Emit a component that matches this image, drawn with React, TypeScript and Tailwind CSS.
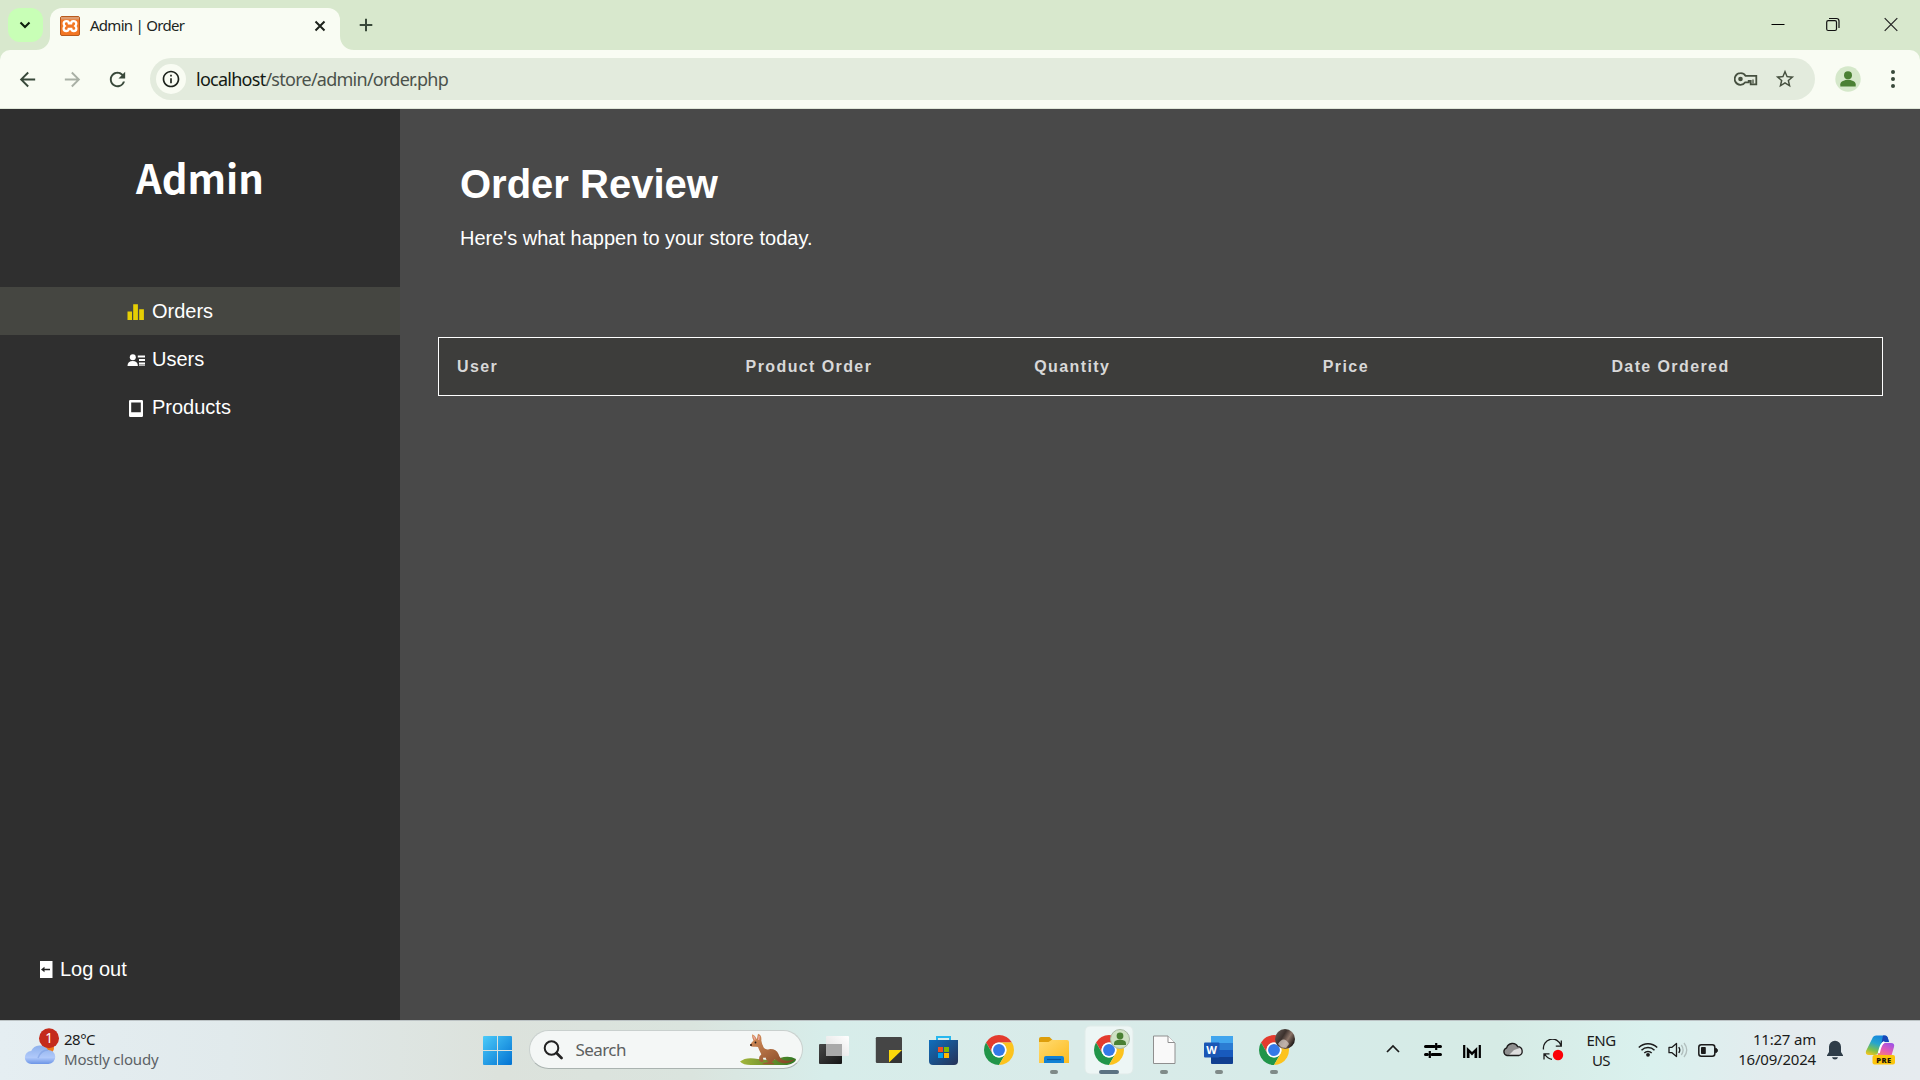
import React from "react";
import { MdArrowBack, MdArrowForward, MdRefresh, MdInfoOutline, MdStarBorder } from "react-icons/md";

function TabFlare({ flip = false }: { flip?: boolean }) {
  return (
    <svg width="14" height="14" viewBox="0 0 14 14" className={flip ? "-scale-x-100 self-end" : "self-end"}>
      <path d="M14 0v14H0C8 14 14 8 14 0z" fill="#f9fcf3" />
    </svg>
  );
}

function XamppIcon() {
  return (
    <svg width="20" height="20" viewBox="0 0 20 20">
      <rect x=".5" y=".5" width="19" height="19" rx="1.5" fill="#f37623" stroke="#b85a1d" />
      <rect x="1" y="1" width="18" height="2.5" fill="#dd9c70" />
      <path
        d="M6.6 5.2c-2 0-2.9 1.2-2.9 2.5 0 1 .5 1.7 1.1 2.3-.7.6-1.2 1.4-1.2 2.4 0 1.5 1.1 2.6 2.7 2.6 1.5 0 2.2-.9 2.4-2.2h2.6c.2 1.3.9 2.2 2.4 2.2 1.6 0 2.7-1.1 2.7-2.6 0-1-.5-1.8-1.2-2.4.6-.6 1.1-1.3 1.1-2.3 0-1.3-.9-2.5-2.9-2.5-1.5 0-2.2.8-2.3 2.1H8.900C8.800 6 8.100 5.200 6.600 5.200z"
        fill="none"
        stroke="#fff"
        strokeWidth="2.3"
      />
    </svg>
  );
}

function TabStrip() {
  return (
    <div className="flex h-[50px] bg-[#d8e8cd]">
      <div className="mt-2 ml-2 flex h-[34px] w-[35px] items-center justify-center rounded-[12px] bg-[#c8ffb6]">
        <svg width="12" height="8" viewBox="0 0 12 8" className="mr-px">
          <path d="M1.500 1.500 6 6l4.500-4.500" fill="none" stroke="#0c200c" strokeWidth="2.100" />
        </svg>
      </div>
      <div className="-ml-[7px] flex">
        <TabFlare />
        <div className="mt-2 flex h-[42px] w-[290px] items-center rounded-t-[12px] bg-[#f9fcf3] pt-px pb-2 pl-[10px]">
          <XamppIcon />
          <span className="ml-[10px] w-[220px] text-[15px] tracking-[-0.72px] whitespace-nowrap text-[#20251e]">Admin | Order</span>
          <svg width="12" height="12" viewBox="0 0 12 12" className="ml-[4px]">
            <path d="M1.500 1.500l9 9M10.500 1.500l-9 9" stroke="#1d221b" strokeWidth="2" />
          </svg>
        </div>
        <TabFlare flip />
      </div>
      <svg width="14" height="14" viewBox="0 0 14 14" className="mt-[18px] ml-[5px]">
        <path d="M7 .7v12.600M.7 7h12.600" stroke="#39493a" strokeWidth="2" />
      </svg>
      <div className="mt-4 mr-[22px] ml-auto flex">
        <svg width="14" height="17" viewBox="0 0 14 17" className="mr-[41px]">
          <path d="M.5 8.500h13" stroke="#000" strokeWidth="1" />
        </svg>
        <svg width="14" height="17" viewBox="0 0 14 17" className="mr-[44px]">
          <rect x=".7" y="4.700" width="9.800" height="9.800" rx="1.500" fill="none" stroke="#111" strokeWidth="1.200" />
          <path d="M3 2.500h7.500q2.500 0 2.500 2.500v7" fill="none" stroke="#111" strokeWidth="1.200" />
        </svg>
        <svg width="14" height="17" viewBox="0 0 14 17">
          <path d="M.7 2.200l12.600 12.600M13.300 2.200.7 14.800" stroke="#222" strokeWidth="1.200" />
        </svg>
      </div>
    </div>
  );
}

function Toolbar() {
  return (
    <div className="bg-[#d8e8cd]">
      <div className="flex h-[59px] items-center rounded-t-[10px] border-b border-[#dfe6d8] bg-[#f9fcf3]">
        <MdArrowBack size={23} className="ml-[16px] text-[#39493a]" />
        <MdArrowForward size={23} className="ml-[22px] text-[#a9b0a5]" />
        <MdRefresh size={23} className="ml-[22px] text-[#39493a]" />
        <div className="ml-[21px] flex h-[42px] w-[1665px] items-center rounded-full bg-[#e3ebdd]">
          <div className="ml-[6px] flex size-[30px] items-center justify-center rounded-full bg-[#f9fcf3]">
            <MdInfoOutline size={20} className="text-[#1d231c]" />
          </div>
          <span className="ml-[10px] text-[18px] tracking-[-0.74px] whitespace-nowrap text-[#4b524b]">
            <span className="text-[#141a14]">localhost</span>/store/admin/order.php
          </span>
          <svg width="24" height="16" viewBox="0 0 24 16" className="ml-auto">
            <path
              d="M6.500 2.200a5.800 5.800 0 1 0 4.800 9.100h3.400v-1.400h2v3.400h5.600V4.900H11.600A5.800 5.800 0 0 0 6.500 2.200z"
              fill="none"
              stroke="#46503f"
              strokeWidth="1.800"
            />
            <circle cx="6.500" cy="8" r="2.300" fill="#46503f" />
            <path d="M19 8.500v4" fill="none" stroke="#46503f" strokeWidth="1.300" />
          </svg>
          <MdStarBorder size={22} className="mr-[19px] ml-[16px] text-[#46503f]" />
        </div>
        <svg width="26" height="26" viewBox="0 0 26 26" className="ml-[20px]">
          <circle cx="13" cy="13" r="12.700" fill="#d5e8ca" />
          <circle cx="13" cy="9.300" r="4" fill="#4a8033" />
          <path d="M5.300 20.500v-2.200c0-3 4.700-4.600 7.700-4.600s7.700 1.600 7.700 4.600v2.200z" fill="#4a8033" />
        </svg>
        <svg width="6" height="20" viewBox="0 0 6 20" className="ml-[29px]">
          <circle cx="3" cy="3" r="2" fill="#39493a" />
          <circle cx="3" cy="10" r="2" fill="#39493a" />
          <circle cx="3" cy="17" r="2" fill="#39493a" />
        </svg>
      </div>
    </div>
  );
}

function BarsIcon() {
  return (
    <svg width="18" height="18" viewBox="0 0 18 18" className="mt-[2px]">
      <path d="M.5 8.500h4.500V17H.5zM6.200 1.200h4.700V17H6.200zM12.200 6.300h4.700V17h-4.700z" fill="#e6cf04" />
    </svg>
  );
}

function UserDetailIcon() {
  return (
    <svg width="18" height="18" viewBox="0 0 18 18" className="mt-px">
      <circle cx="5.800" cy="6.200" r="3" fill="#fff" />
      <path d="M.5 15c0-3.200 2-5 5.200-5s5.200 1.800 5.200 5z" fill="#fff" />
      <path d="M10.800 5.500h7.200M12 9h6M12 12.500h6" stroke="#fff" strokeWidth="1.800" />
      <path d="M12 14.300h6" stroke="#fff" strokeWidth=".8" />
    </svg>
  );
}

function TabletIcon() {
  return (
    <svg width="18" height="18" viewBox="0 0 18 18" className="mt-px">
      <path fillRule="evenodd" d="M3.200 1h11.600q1.200 0 1.200 1.200v14.600q0 1.200-1.200 1.200H3.200Q2 18 2 16.800V2.200Q2 1 3.200 1zM4.200 3.500v9.800h9.600V3.500z" fill="#fff" />
    </svg>
  );
}

const navItems = [
  { label: "Orders", icon: <BarsIcon />, active: true },
  { label: "Users", icon: <UserDetailIcon />, active: false },
  { label: "Products", icon: <TabletIcon />, active: false },
];

function Sidebar() {
  return (
    <div className="flex w-[400px] flex-col bg-[#2f2f2f] font-['Liberation_Sans',sans-serif] text-[20px] text-white">
      <div className="h-[178px] pt-[38px] text-center font-['Noto_Sans_CJK_JP',sans-serif] text-[40px] leading-[60px] font-bold">Admin</div>
      {navItems.map((n) => (
        <div key={n.label} className={n.active ? "flex h-12 items-center bg-[#454641] pl-[127px]" : "flex h-12 items-center pl-[127px]"}>
          {n.icon}
          <span className="ml-[7px]">{n.label}</span>
        </div>
      ))}
      <div className="mt-auto mb-[36px] flex h-[30px] items-center pl-10">
        <svg width="13" height="18" viewBox="0 0 13 18">
          <rect x="0" y="1" width="12.500" height="17" fill="#fff" />
          <path d="M1 9.500 4.500 6.700v5.600z" fill="#222" />
          <path d="M3.500 9.500h6.500" stroke="#222" strokeWidth="1.500" />
        </svg>
        <span className="ml-[7px]">Log out</span>
      </div>
    </div>
  );
}

const columns = ["User", "Product Order", "Quantity", "Price", "Date Ordered"];

function OrderPanel() {
  return (
    <div className="flex-1 bg-[#494949] font-['Liberation_Sans',sans-serif] text-white">
      <div className="pt-[52px] pl-[60px] text-[40px] leading-[46px] font-bold">Order Review</div>
      <div className="mt-[19px] pl-[60px] text-[20px] leading-[24px]">Here's what happen to your store today.</div>
      <div className="mt-[87px] ml-[38px] grid h-[59px] w-[1445px] grid-cols-5 items-center border border-white bg-[#3d3d3b] text-[16px] font-bold text-[#d8d8d8]">
        {columns.map((c) => (
          <div key={c} className="pl-[18px] tracking-[1.4px]">{c}</div>
        ))}
      </div>
    </div>
  );
}

function ChromeMark() {
  return (
    <svg x="13" y="15" width="30" height="30" viewBox="0 0 48 48">
      <path d="M24 12H44.780A24 24 0 0 0 3.220 12L13.600 30A12 12 0 0 1 24 12z" fill="#e33b2e" />
      <path d="M13.600 30 3.220 12A24 24 0 0 0 24 48L34.400 30A12 12 0 0 1 13.600 30z" fill="#219549" />
      <path d="M34.400 30 24 48A24 24 0 0 0 44.780 12H24A12 12 0 0 1 34.400 30z" fill="#fcc31e" />
      <circle cx="24" cy="24" r="12" fill="#fff" />
      <circle cx="24" cy="24" r="9.500" fill="#3479e8" />
    </svg>
  );
}

function Slot({ children }: { children: React.ReactNode }) {
  return (
    <svg width="55" height="60" viewBox="0 0 55 60" className="shrink-0">
      {children}
    </svg>
  );
}

const Dot = () => <rect x="24" y="50" width="8" height="4" rx="2" fill="#7f8a88" />;

function AppIcons() {
  return (
    <div className="flex">
      <Slot>
        <defs>
          <linearGradient id="tvDark" x1="0" y1="0" x2="1" y2="1">
            <stop offset="0" stopColor="#484848" />
            <stop offset="1" stopColor="#151515" />
          </linearGradient>
          <linearGradient id="tvLight" x1="1" y1="0" x2="0" y2="1">
            <stop offset="0" stopColor="#fff" />
            <stop offset="1" stopColor="#dedede" />
          </linearGradient>
        </defs>
        <rect x="13" y="24" width="23" height="20" rx="1" fill="url(#tvDark)" />
        <rect x="20" y="16" width="23" height="20" rx="1" fill="url(#tvLight)" />
        <rect x="20" y="24" width="16" height="12" fill="#a9a9a9" />
      </Slot>
      <Slot>
        <rect x="14.800" y="17" width="26.200" height="26" rx="1.200" fill="#454545" />
        <path d="M28 43V30h13v13z" fill="#333" />
        <path d="M28 30h13L28 42.500z" fill="#fcd80b" />
      </Slot>
      <Slot>
        <defs>
          <linearGradient id="store" x1="0" y1="0" x2="1" y2="1">
            <stop offset="0" stopColor="#0f6fbe" />
            <stop offset="1" stopColor="#263256" />
          </linearGradient>
        </defs>
        <path d="M21 22v-5h13v5" fill="none" stroke="#27b7ee" strokeWidth="2" />
        <path d="M13 20h29v21q0 4-4 4H17q-4 0-4-4z" fill="url(#store)" />
        <rect x="22" y="27" width="5" height="5" fill="#f25022" />
        <rect x="28" y="27" width="5" height="5" fill="#7fba00" />
        <rect x="22" y="33" width="5" height="5" fill="#00a4ef" />
        <rect x="28" y="33" width="5" height="5" fill="#ffb900" />
      </Slot>
      <Slot>
        <ChromeMark />
      </Slot>
      <Slot>
        <defs>
          <linearGradient id="folder" x1="0" y1="0" x2="1" y2="1">
            <stop offset="0" stopColor="#ffdb72" />
            <stop offset="1" stopColor="#fdbb1d" />
          </linearGradient>
        </defs>
        <path d="M13 23v-4q0-2 2-2h8.500l3 3-3 3z" fill="#dd9e0b" />
        <path d="M13 22h9.500l3-2H41q2 0 2 2v21H13z" fill="url(#folder)" />
        <path d="M18 43v-5q0-2 2-2h16q2 0 2 2v5z" fill="#1281d4" />
        <path d="M21 39.500h14" stroke="#0a569c" strokeWidth="1.200" />
        <Dot />
      </Slot>
      <Slot>
        <rect x="4" y="6" width="48" height="48" rx="5" fill="#edf6f5" stroke="#e0ebe9" />
        <ChromeMark />
        <circle cx="39" cy="19" r="9.500" fill="#cfe2c4" stroke="#a9b8a3" />
        <circle cx="39" cy="16" r="3.400" fill="#4a8033" />
        <path d="M33 25v-1.500q0-3.700 6-3.700t6 3.700V25z" fill="#4a8033" />
        <rect x="18" y="50" width="20" height="4" rx="2" fill="#5b7282" />
      </Slot>
      <Slot>
        <path d="M17.500 16H32l7 7v20.500H17.500z" fill="#f9f9f9" stroke="#8f8f8f" />
        <path d="M32 16v6.500h6.500" fill="#fff" stroke="#8f8f8f" />
        <Dot />
      </Slot>
      <Slot>
        <rect x="20" y="16" width="22" height="28" rx="1" fill="#103f91" />
        <path d="M20 16h22v7H20z" fill="#41a5ee" />
        <path d="M20 23h22v7H20z" fill="#2b7cd3" />
        <path d="M20 30h22v7H20z" fill="#185abd" />
        <rect x="13" y="22.500" width="15.500" height="15" rx="1" fill="#1a56b5" />
        <text x="20.600" y="34" textAnchor="middle" fontFamily="Open Sans, sans-serif" fontWeight="700" fontSize="11" fill="#fff">W</text>
        <Dot />
      </Slot>
      <Slot>
        <defs>
          <linearGradient id="photo" x1="0" y1="0" x2="1" y2=".6">
            <stop offset="0" stopColor="#6f6660" />
            <stop offset=".45" stopColor="#3c312d" />
            <stop offset=".7" stopColor="#8c7468" />
            <stop offset="1" stopColor="#1f1917" />
          </linearGradient>
        </defs>
        <ChromeMark />
        <circle cx="39" cy="19" r="10" fill="url(#photo)" />
        <path d="M32 24q3-5 6-4.500t5 4.500l-3 4-5-1z" fill="#d8cfc8" opacity=".7" />
        <Dot />
      </Slot>
    </div>
  );
}

function Kangaroo() {
  return (
    <svg width="58" height="34" viewBox="0 0 58 34">
      <defs>
        <linearGradient id="grass" x1="0" y1="0" x2="1" y2="0">
          <stop offset="0" stopColor="#a4b83c" />
          <stop offset=".5" stopColor="#6f8f2c" />
          <stop offset="1" stopColor="#2f7a25" />
        </linearGradient>
        <linearGradient id="fur" x1="0" y1="0" x2="1" y2="1">
          <stop offset="0" stopColor="#d9935e" />
          <stop offset="1" stopColor="#7d4020" />
        </linearGradient>
      </defs>
      <path d="M1 28.500q6-5 18-2.500 14 2 22-1 9-3 16 1 0 4-9 6H12Q4 32 1 28.500z" fill="url(#grass)" />
      <path
        d="M14.500 7.500Q12.500 4 13.300 1.300q3 1.200 4.500 5L19 .8q4 1.200 3.300 6.700.3 3 2.700 7.500 2 2 5 1.200 7-.7 9.500 4.800 1.500 5.500 5.500 6.300 5 1 11-1-5 4.700-12 3.900-5-.8-8-4.200l-3.500 3.500 2.500.8v1H23.500q0-1.500 3.500-1.800l2.500-.5q-2.500-2-3-4.500-1.500.5-2.500.2l.5 3.800-2 .8-2.500-1.800.3-3.700 2-2.500Q20 17 19 14q-1.500-.5-3.500-.2-3.800.3-4.300-1.800 1.300-2.700 3.300-4.500z"
        fill="url(#fur)"
      />
      <path d="M14.500 3.200l1.600 3.600M20.200 2.800l-.6 4.200" stroke="#f0a6a0" strokeWidth="1.300" />
      <circle cx="16.500" cy="9.500" r=".9" fill="#1a1a1a" />
      <circle cx="12" cy="12" r="1" fill="#2a1a14" />
    </svg>
  );
}

function Tray() {
  return (
    <div className="flex items-center text-[#1b1b1b]">
      <svg width="14" height="10" viewBox="0 0 14 10" className="-mt-[2px]">
        <path d="M1 8 7 2l6 6" fill="none" stroke="#1b1b1b" strokeWidth="1.700" />
      </svg>
      <svg width="18" height="18" viewBox="0 0 18 18" className="ml-6">
        <path d="M1.500 5.500h9M14 5.500h2.500M1.500 13.500h2M8 13.500h8.500" stroke="#000" strokeWidth="3" strokeLinecap="round" />
        <path d="M12.200 2v7M5.800 10v7" stroke="#000" strokeWidth="2.200" />
      </svg>
      <svg width="18" height="15" viewBox="0 0 18 15" className="mt-[2px] ml-[21px]">
        <path d="M1.200 1v13M16.800 1v13" stroke="#000" strokeWidth="2.200" />
        <path d="M3.800 14V3l5.200 5 5.200-5v11h-2.700V8.800L9 11.500 6.500 8.800V14z" fill="#000" />
      </svg>
      <svg width="22" height="16" viewBox="0 0 22 16" className="-mt-[2px] ml-[21px]">
        <path d="M5 15a4.200 4.200 0 0 1-.3-8.200A6 6 0 0 1 15.800 5.700 4.700 4.700 0 0 1 17 15z" fill="#ddd" />
        <path d="M5 15a4.200 4.200 0 0 1-.3-8.200A6 6 0 0 1 15.800 5.700L18 7l-6 2-6 6z" fill="#8f8f8f" />
        <path d="M5 14.500a4 4 0 0 1-.3-7.700A6 6 0 0 1 15.800 5.700 4.500 4.500 0 0 1 17 14.500z" fill="none" stroke="#1b1b1b" strokeWidth="1.300" />
      </svg>
      <svg width="22" height="22" viewBox="0 0 22 22" className="ml-[18px]">
        <path d="M1.500 10.500A9 9 0 0 1 19 6.500M19.300 1.500v5.700h-5.500M10 20.300Q5.500 19.500 3 15.500M2 20.500v-5.700h5.500" fill="none" stroke="#1b1b1b" strokeWidth="1.300" />
        <circle cx="16" cy="16" r="5.200" fill="#fb0007" />
      </svg>
      <div className="-mt-px ml-[19px] w-[36px] text-center text-[15px] leading-5 tracking-[-0.5px]">
        ENG
        <br />
        US
      </div>
      <svg width="20" height="16" viewBox="0 0 20 16" className="-mt-[2px] ml-[19px]">
        <path d="M.8 6.500a13 13 0 0 1 18.400 0M3.500 9.300a9.200 9.200 0 0 1 13 0M6.300 12a5.300 5.300 0 0 1 7.400 0" fill="none" stroke="#1b1b1b" strokeWidth="1.500" />
        <circle cx="10" cy="13.800" r="1.900" fill="#1b1b1b" />
      </svg>
      <svg width="20" height="18" viewBox="0 0 20 18" className="ml-[10px]">
        <path d="M1 6.300h3L8.500 2.500v13L4 11.700H1z" fill="none" stroke="#1b1b1b" strokeWidth="1.300" strokeLinejoin="round" />
        <path d="M10.800 6q2 3 0 6" fill="none" stroke="#1b1b1b" strokeWidth="1.300" />
        <path d="M13.300 4q3.600 5 0 10M16 2q5.500 7 0 14" fill="none" stroke="#b1bebd" strokeWidth="1.300" />
      </svg>
      <svg width="20" height="13" viewBox="0 0 20 13" className="ml-[10px]">
        <rect x=".8" y=".8" width="16" height="11.400" rx="2.500" fill="none" stroke="#1b1b1b" strokeWidth="1.500" />
        <rect x="3" y="3" width="4.800" height="7" rx=".8" fill="#1b1b1b" />
        <path d="M17.500 4.300q2 .4 2 2.200t-2 2.200z" fill="#1b1b1b" stroke="#1b1b1b" />
      </svg>
      <div className="-mt-[3px] w-[98px] text-right text-[15px] leading-5 tracking-[-0.2px] whitespace-nowrap">
        11:27 am
        <br />
        16/09/2024
      </div>
      <svg width="18" height="20" viewBox="0 0 18 20" className="ml-[10px]">
        <path d="M9 .8a6 6 0 0 0-6 6V12L1 15.300V16h16v-.7L15 12V6.800a6 6 0 0 0-6-6z" fill="#2f3d49" />
        <path d="M6 17.200h6q-.6 2.300-3 2.300t-3-2.300z" fill="#2f3d49" />
      </svg>
      <svg width="31" height="31" viewBox="0 0 31 31" className="mt-px mr-[24px] ml-[21px]">
        <defs>
          <linearGradient id="cpA" x1=".6" y1="0" x2=".2" y2="1">
            <stop offset="0" stopColor="#1585dd" />
            <stop offset=".4" stopColor="#25a5cf" />
            <stop offset=".75" stopColor="#7fc04a" />
            <stop offset="1" stopColor="#f0c520" />
          </linearGradient>
          <linearGradient id="cpB" x1=".8" y1="0" x2=".2" y2="1">
            <stop offset="0" stopColor="#9f52e5" />
            <stop offset=".5" stopColor="#e45cb5" />
            <stop offset="1" stopColor="#fd8a62" />
          </linearGradient>
        </defs>
        <path d="M8 2q1-1.500 3-1.500h9q2 0 2.700 2L24 7h-5q-2 0-3 3l-3 8q-.8 2-3 2H4q-4 0-3-4z" fill="url(#cpA)" />
        <path d="M18 .5h2q2 0 2.700 2L24 7h-5q-2 0-2.500 1z" fill="#1747b8" />
        <path d="M19 8h7q4 0 3 4l-3 10H9q3 0 4-3l3-8q1-3 3-3z" fill="url(#cpB)" />
        <path d="M13.800 18q2.200-10 5.600-11" stroke="#fff" strokeWidth="2" fill="none" />
        <rect x="7.500" y="20" width="22.500" height="9.500" rx="2" fill="#fcc50c" />
        <text x="19" y="27.500" textAnchor="middle" fontFamily="Open Sans, sans-serif" fontWeight="800" fontSize="7.500" letterSpacing=".5" fill="#1a1608">PRE</text>
      </svg>
    </div>
  );
}

function Taskbar() {
  return (
    <div className="flex h-[60px] items-center bg-[linear-gradient(90deg,#e5eef2_0%,#e1eaec_12%,#dce2dc_26%,#dae4de_36%,#d7edea_43%,#d9ebe9_56%,#d6ebe8_70%,#d6ebe5_78%,#daf1ee_86%,#e4ebee_93%,#e6ebef_100%)] shadow-[inset_0_1px_0_#bcc3c5]">
      <svg width="36" height="40" viewBox="0 0 36 40" className="-mt-[5px] ml-6 shrink-0">
        <defs>
          <linearGradient id="cloud" x1="0" y1="0" x2="0" y2="1">
            <stop offset="0" stopColor="#8db0ec" />
            <stop offset=".65" stopColor="#b0c9fa" />
            <stop offset="1" stopColor="#6c95e6" />
          </linearGradient>
        </defs>
        <circle cx="24" cy="20" r="6" fill="#f07b1c" />
        <path d="M7.500 36a6.500 6.500 0 0 1-.3-13A9.500 9.500 0 0 1 24 22a7 7 0 0 1 .5 14z" fill="url(#cloud)" />
        <path d="M14 30q3-8 10-8" stroke="#7b9fe2" strokeWidth="1.500" fill="none" opacity=".6" />
        <circle cx="25" cy="10.300" r="10" fill="#c42b1c" />
        <text x="25" y="15.300" textAnchor="middle" fontFamily="Noto Sans, sans-serif" fontSize="13.500" fill="#fff">1</text>
      </svg>
      <div className="-mt-[3px] ml-1 w-[419px] text-[15px] leading-5 tracking-[-0.2px] text-[#1b1b1b]">
        <span className="tracking-[-0.5px]">28°C</span>
        <br />
        <span className="text-[#5c6266]">Mostly cloudy</span>
      </div>
      <svg width="29" height="29" viewBox="0 0 29 29" className="mt-px shrink-0">
        <defs>
          <linearGradient id="win" gradientUnits="userSpaceOnUse" x1="0" y1="0" x2="29" y2="29">
            <stop offset="0" stopColor="#4ccbf9" />
            <stop offset="1" stopColor="#0272d2" />
          </linearGradient>
        </defs>
        <path d="M0 1q0-1 1-1h13v14H0zM15 0h13q1 0 1 1v13H15zM0 15h14v14H1q-1 0-1-1zM15 15h14v13q0 1-1 1H15z" fill="url(#win)" />
      </svg>
      <div className="-mt-px ml-[17px] flex h-[39px] w-[274px] shrink-0 items-center rounded-full border border-[#c9d0ce] border-b-[#aab3b0] bg-[#f4f7f6] pl-[13px]">
        <svg width="20" height="20" viewBox="0 0 20 20">
          <circle cx="8.500" cy="8" r="6.800" fill="none" stroke="#222" strokeWidth="2" />
          <path d="M13.500 13l5 5" stroke="#222" strokeWidth="2.700" strokeLinecap="round" />
        </svg>
        <span className="ml-[13px] w-[163px] text-[17px] tracking-[-0.6px] text-[#5c6060]">Search</span>
        <Kangaroo />
      </div>
      <div className="ml-[3px] w-[581px]">
        <AppIcons />
      </div>
      <Tray />
    </div>
  );
}

export default function App() {
  return (
    <div className="flex h-[1080px] w-[1920px] flex-col overflow-hidden font-['Noto_Sans',sans-serif]">
      <TabStrip />
      <Toolbar />
      <div className="flex min-h-0 flex-1">
        <Sidebar />
        <OrderPanel />
      </div>
      <Taskbar />
    </div>
  );
}
